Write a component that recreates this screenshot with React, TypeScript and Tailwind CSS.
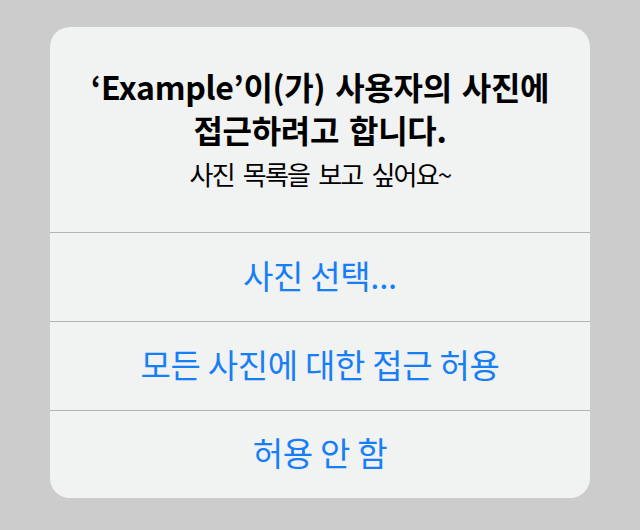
const font = { fontFamily: '"Noto Sans CJK KR", "Noto Sans", sans-serif' };

const actions = ['사진 선택...', '모든 사진에 대한 접근 허용', '허용 안 함'];

export default function App() {
  return (
    <div className="min-h-[530px] w-[640px] bg-[#cccccc] pt-[27px]" style={font}>
      <div className="mx-auto w-[540px] overflow-hidden rounded-[20px] bg-[#f1f2f2]">
        <div className="px-6 pt-[38px] pb-[43px] text-center text-black">
          <h2 className="text-[32px] font-bold leading-[43px] tracking-[-0.3px] [word-spacing:3px]">
            ‘Example’이(가) 사용자의 사진에
            <br />
            접근하려고 합니다.
          </h2>
          <p className="mt-[8px] text-[26px] leading-[30px] tracking-[-1.8px] [word-spacing:5px]">
            사진 목록을 보고 싶어요~
          </p>
        </div>
        {actions.map((label) => (
          <button
            key={label}
            className="flex h-[89px] w-full items-center justify-center border-t border-[#b3b3b3] pb-[3px] text-[33px] tracking-[-0.3px] text-[#167ef7] last:h-[88px]"
          >
            {label}
          </button>
        ))}
      </div>
    </div>
  );
}
